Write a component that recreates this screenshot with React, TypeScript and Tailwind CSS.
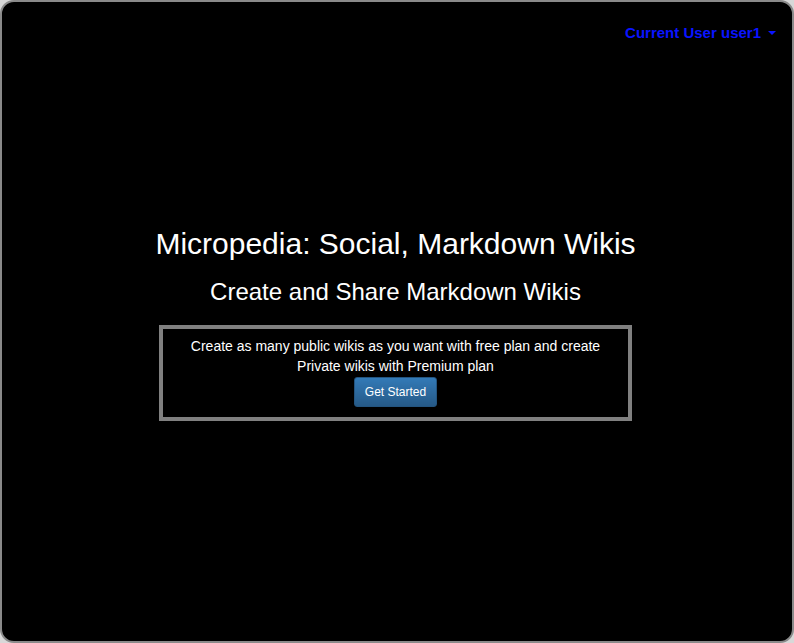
export default function App() {
  return (
    <div
      className="w-[794px] h-[643px] bg-[#d8d8d8]"
      style={{ fontFamily: '"Liberation Sans", Arial, sans-serif' }}
    >
      <div className="w-full h-full bg-black border-2 border-[#8a8a8a] rounded-[14px] flex flex-col">
        <div className="flex justify-end pt-[21px] pr-[16px]">
          <button className="flex items-center gap-[7px] text-[15px] font-bold text-[#0a14ff] leading-5">
            Current User user1
            <span className="w-0 h-0 border-x-[4px] border-x-transparent border-t-[4px] border-t-[#0a14ff]" />
          </button>
        </div>

        <div className="flex flex-col items-center mt-[184px] pr-[3px] text-white">
          <h1 className="text-[30px] leading-[33px]">Micropedia: Social, Markdown Wikis</h1>
          <h2 className="text-[24px] leading-[28px] mt-[18px]">Create and Share Markdown Wikis</h2>

          <div className="mt-[19px] w-[473px] border-4 border-[#808080] flex flex-col items-center pt-[7px] pb-[10px] text-[14px] leading-5 text-center">
            <p>
              Create as many public wikis as you want with free plan and create
              <br />
              Private wikis with Premium plan
            </p>
            <button className="mt-[1px] h-[30px] px-[10px] text-[12px] text-white rounded-[3px] border border-[#245580] bg-gradient-to-b from-[#337ab7] to-[#265a88]">
              Get Started
            </button>
          </div>
        </div>
      </div>
    </div>
  )
}
